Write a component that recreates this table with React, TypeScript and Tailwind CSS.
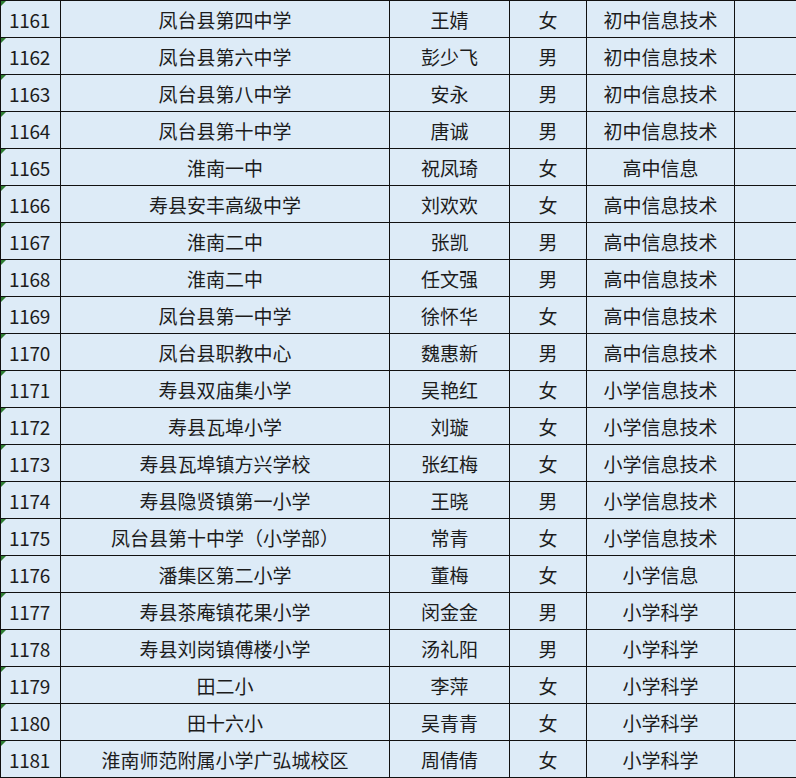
import React from "react";

const rows: [string, string, string, string, string][] = [
  ["1161", "凤台县第四中学", "王婧", "女", "初中信息技术"],
  ["1162", "凤台县第六中学", "彭少飞", "男", "初中信息技术"],
  ["1163", "凤台县第八中学", "安永", "男", "初中信息技术"],
  ["1164", "凤台县第十中学", "唐诚", "男", "初中信息技术"],
  ["1165", "淮南一中", "祝凤琦", "女", "高中信息"],
  ["1166", "寿县安丰高级中学", "刘欢欢", "女", "高中信息技术"],
  ["1167", "淮南二中", "张凯", "男", "高中信息技术"],
  ["1168", "淮南二中", "任文强", "男", "高中信息技术"],
  ["1169", "凤台县第一中学", "徐怀华", "女", "高中信息技术"],
  ["1170", "凤台县职教中心", "魏惠新", "男", "高中信息技术"],
  ["1171", "寿县双庙集小学", "吴艳红", "女", "小学信息技术"],
  ["1172", "寿县瓦埠小学", "刘璇", "女", "小学信息技术"],
  ["1173", "寿县瓦埠镇方兴学校", "张红梅", "女", "小学信息技术"],
  ["1174", "寿县隐贤镇第一小学", "王晓", "男", "小学信息技术"],
  ["1175", "凤台县第十中学（小学部）", "常青", "女", "小学信息技术"],
  ["1176", "潘集区第二小学", "董梅", "女", "小学信息"],
  ["1177", "寿县茶庵镇花果小学", "闵金金", "男", "小学科学"],
  ["1178", "寿县刘岗镇傅楼小学", "汤礼阳", "男", "小学科学"],
  ["1179", "田二小", "李萍", "女", "小学科学"],
  ["1180", "田十六小", "吴青青", "女", "小学科学"],
  ["1181", "淮南师范附属小学广弘城校区", "周倩倩", "女", "小学科学"],
];

export default function App() {
  return (
    <div
      className="w-[796px] h-[778px] overflow-hidden bg-[#ddebf7] text-[19px] text-[#1c1c1c]"
      style={{ fontFamily: '"Noto Sans CJK SC", "Microsoft YaHei", sans-serif' }}
    >
      <div className="grid grid-cols-[60px_329px_120px_77px_148px_1fr] border-t border-l border-[#111]">
        {rows.map((r) => (
          <React.Fragment key={r[0]}>
            <div className="relative h-[37px] flex items-center pl-2 border-r border-b border-[#111] leading-none">
              <svg className="absolute left-0 top-0" width="5" height="5" viewBox="0 0 5 5">
                <polygon points="0,0 5,0 0,5" fill="#2e7d32" />
              </svg>
              <span className="tracking-[-0.3px]">{r[0]}</span>
            </div>
            <div className="h-[37px] flex items-center justify-center border-r border-b border-[#111] leading-none whitespace-nowrap">
              {r[1]}
            </div>
            <div className="h-[37px] flex items-center justify-center border-r border-b border-[#111] leading-none">
              {r[2]}
            </div>
            <div className="h-[37px] flex items-center justify-center border-r border-b border-[#111] leading-none">
              {r[3]}
            </div>
            <div className="h-[37px] flex items-center justify-center border-r border-b border-[#111] leading-none">
              {r[4]}
            </div>
            <div className="h-[37px] border-b border-[#111]" />
          </React.Fragment>
        ))}
      </div>
    </div>
  );
}
